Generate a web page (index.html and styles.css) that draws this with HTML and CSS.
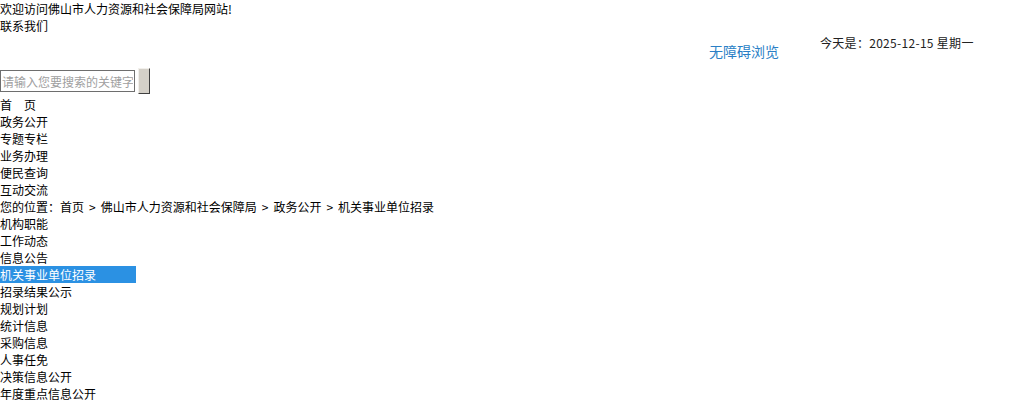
FILE: index.html
```html
<!DOCTYPE html>
<html lang="zh-CN">
<head>
<meta charset="utf-8">
<title>佛山市人力资源和社会保障局</title>
<link rel="stylesheet" href="styles.css">
</head>
<body>
<div class="top">
  <div class="line">欢迎访问佛山市人力资源和社会保障局网站!</div>
  <div class="line"><a class="plain" href="#">联系我们</a></div>
  <div class="toolbar">
    <a class="access" href="#">无障碍浏览</a>
    <div class="date">今天是：2025-12-15 星期一</div>
  </div>
  <form class="search">
    <input class="search-input" type="text" placeholder="请输入您要搜索的关键字">
    <button class="search-btn" type="button"></button>
  </form>
</div>
<ul class="nav">
  <li><a class="plain" href="#">首&emsp;页</a></li>
  <li><a class="plain" href="#">政务公开</a></li>
  <li><a class="plain" href="#">专题专栏</a></li>
  <li><a class="plain" href="#">业务办理</a></li>
  <li><a class="plain" href="#">便民查询</a></li>
  <li><a class="plain" href="#">互动交流</a></li>
</ul>
<div class="crumb">您的位置：<a class="plain" href="#">首页</a><span class="sep">&gt;</span><a class="plain" href="#">佛山市人力资源和社会保障局</a><span class="sep">&gt;</span><a class="plain" href="#">政务公开</a><span class="sep">&gt;</span><a class="plain" href="#">机关事业单位招录</a></div>
<ul class="side">
  <li><a class="plain" href="#">机构职能</a></li>
  <li><a class="plain" href="#">工作动态</a></li>
  <li><a class="plain" href="#">信息公告</a></li>
  <li class="active"><a class="plain" href="#">机关事业单位招录</a></li>
  <li><a class="plain" href="#">招录结果公示</a></li>
  <li><a class="plain" href="#">规划计划</a></li>
  <li><a class="plain" href="#">统计信息</a></li>
  <li><a class="plain" href="#">采购信息</a></li>
  <li><a class="plain" href="#">人事任免</a></li>
  <li><a class="plain" href="#">决策信息公开</a></li>
  <li><a class="plain" href="#">年度重点信息公开</a></li>
</ul>
</body>
</html>
```

FILE: styles.css
```css
html, body {
  margin: 0;
  padding: 0;
  background: #fff;
}
body {
  font-family: "Noto Sans CJK SC", "Noto Sans", sans-serif;
  font-size: 12px;
  line-height: 17px;
  color: #000;
}
.plain {
  color: #000;
  text-decoration: none;
}
.line {
  height: 17px;
}
.toolbar {
  display: flex;
  justify-content: flex-end;
  align-items: flex-start;
  height: 34px;
  padding-right: 49px;
}
.access {
  font-size: 14px;
  line-height: 20px;
  margin-top: 7px;
  color: #2a7fc6;
  text-decoration: none;
  margin-right: 41px;
}
.date {
  width: 155px;
  color: #222;
  line-height: 17px;
  letter-spacing: 0.3px;
  white-space: nowrap;
}
.search {
  display: flex;
  align-items: flex-start;
  height: 28px;
  margin: 0;
}
.search-input {
  box-sizing: border-box;
  width: 135px;
  height: 22px;
  margin: 2px 0 0 0;
  padding: 0 1px;
  border: 1px solid #6e6e6e;
  font-family: "Noto Sans CJK SC", sans-serif;
  font-size: 12px;
  color: #333;
  outline: none;
}
.search-input::placeholder {
  color: #a0a0a0;
}
.search-btn {
  box-sizing: border-box;
  width: 12px;
  height: 26px;
  margin: 0 0 0 3px;
  padding: 0;
  background: #d4d0c8;
  border: 1px solid;
  border-color: #f2f0ec #404040 #404040 #f2f0ec;
}
.nav, .side {
  list-style: none;
  margin: 0;
  padding: 0;
}
.nav li, .side li {
  height: 17px;
}
.crumb {
  height: 17px;
  white-space: nowrap;
}
.sep {
  margin: 0 5px;
}
.side li.active {
  width: 136px;
  background: #2b91e3;
}
.side li.active .plain {
  color: #fff;
}
```
